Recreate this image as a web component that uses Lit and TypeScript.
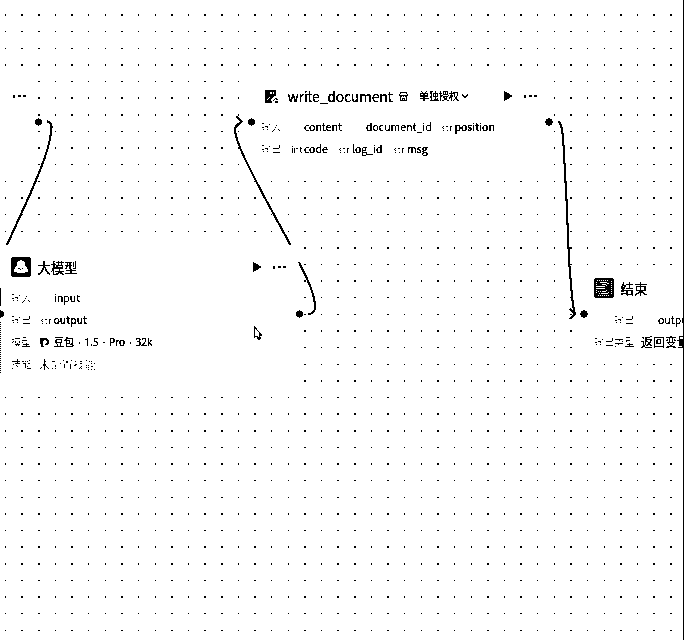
import { LitElement, html, svg, css } from "lit";
import { customElement } from "lit/decorators.js";

type Cell = { x: number; text: string; cls: string; icon?: boolean };
type Row = { cells: Cell[] };

const PITCH = 16.63;

// Grid points straddle one or two device pixels depending on their phase.
const snap = (i: number, origin: number) => {
  const c = origin + i * PITCH;
  const near = Math.round(c);
  return Math.abs(c - near) < 0.24 ? { p: near - 1, s: 2 } : { p: Math.floor(c), s: 1 };
};

const topRows: Row[] = [
  { cells: [
    { x: 261, text: "输入", cls: "label" }, { x: 304, text: "content", cls: "name" },
    { x: 366, text: "document_id", cls: "name" }, { x: 441.5, text: "str", cls: "type" },
    { x: 454.5, text: "position", cls: "name mid" } ] },
  { cells: [
    { x: 261, text: "输出", cls: "label" }, { x: 291, text: "int", cls: "type" },
    { x: 304, text: "code", cls: "name mid" }, { x: 338.5, text: "str", cls: "type" },
    { x: 352, text: "log_id", cls: "name mid" }, { x: 393.5, text: "str", cls: "type" },
    { x: 407, text: "msg", cls: "name mid" } ] },
];
const llmRows: Row[] = [
  { cells: [{ x: 11, text: "输入", cls: "label" }, { x: 54, text: "input", cls: "name" }] },
  { cells: [
    { x: 11, text: "输出", cls: "label" }, { x: 40.5, text: "str", cls: "type" },
    { x: 53.5, text: "output", cls: "name mid" } ] },
  { cells: [
    { x: 11, text: "模型", cls: "label" }, { x: 40, text: "", cls: "", icon: true },
    { x: 54, text: "豆包 · 1.5 · Pro · 32k", cls: "model mid" } ] },
  { cells: [{ x: 11, text: "技能", cls: "label" }, { x: 39, text: "未配置技能", cls: "empty" }] },
];
const endRows: Row[] = [
  { cells: [{ x: 614, text: "输出", cls: "label" }, { x: 658, text: "output", cls: "name" }] },
  { cells: [{ x: 594, text: "输出类型", cls: "label" }, { x: 641, text: "返回变量", cls: "ret" }] },
];

@customElement("app-root")
export class AppRoot extends LitElement {
  static styles = css`
    :host { display: block; width: 684px; height: 640px; overflow: hidden; background: #fff; }
    .canvas {
      position: relative; width: 684px; height: 640px; overflow: hidden; background: #fff;
      box-sizing: border-box; color: #000; filter: url(#ink);
      font-family: "Noto Sans CJK SC", "Noto Sans", sans-serif;
    }
    .layer { position: absolute; left: 0; top: 0; width: 684px; height: 640px; }
    .defs { position: absolute; width: 0; height: 0; }
    .edge { position: absolute; right: 0; top: 0; width: 1px; height: 640px; background: #000; }
    .node { position: absolute; background: #fff; display: flex; flex-direction: column; }
    .prev { left: 0; top: 72px; width: 36px; height: 104px; }
    .tool { left: 251px; top: 72px; width: 298px; height: 104px; }
    .llm { left: 0; top: 246px; width: 299px; height: 147px; }
    .end { left: 584px; top: 272px; width: 99px; height: 88px; overflow: hidden; }
    .head { display: flex; align-items: center; height: 24px; flex: none; white-space: nowrap; }
    .tool .head { padding: 12px 11px 0 14px; }
    .prev .head { padding: 12px 0 0 12px; }
    .llm .head { padding: 9px 12px 0 11px; }
    .end .head { padding: 4px 0 0 10px; }
    .head svg { flex: none; display: block; }
    .title { font-size: 13.4px; line-height: 20px; margin-left: 6.5px; -webkit-text-stroke: .15px #000; }
    .tool .title { font-size: 14px; letter-spacing: -.24px; margin-left: 9.5px; width: 105.5px; }
    .auth { font-size: 10px; line-height: 14px; margin-left: 11px; width: 42px; -webkit-text-stroke: .1px #000; }
    .grow { flex: 1; }
    .store { margin-left: 6px; }
    .play { margin-right: 10px; }
    .rows { flex: 1; }
    .row { display: grid; height: 22px; align-items: center; }
    .row > * { grid-area: 1 / 1; white-space: nowrap; line-height: 16px; justify-self: start; }
    .tool .rows { margin-top: 8px; }
    .llm .rows { margin-top: 8px; flex: none; }
    .end .rows { margin-top: 9px; }
    .label { font-size: 10.2px; color: rgba(0, 0, 0, .56); }
    .type { font-size: 9.2px; color: rgba(0, 0, 0, .64); }
    .name { font-size: 10.5px; -webkit-text-stroke: .08px #000; }
    .model { font-size: 10px; font-family: "Noto Sans", "Noto Sans CJK SC", sans-serif; word-spacing: 1.3px; }
    .mid { -webkit-text-stroke: .22px #000; }
    .empty { font-size: 11.4px; color: rgba(0, 0, 0, .54); }
    .ret { font-size: 12px; -webkit-text-stroke: .1px #000; }
  `;

  private dots() {
    const out = [];
    for (let r = 0; r < 38; r++) {
      const y = snap(r, 15.05);
      for (let c = 0; c < 41; c++) {
        const x = snap(c, 5.6);
        out.push(svg`<rect x=${x.p} y=${y.p} width=${x.s} height=${y.s}></rect>`);
      }
    }
    return out;
  }

  private more() {
    return html`<svg width="15" height="4" viewBox="0 0 15 4" shape-rendering="crispEdges">
      <path d="M1 1h2v3H1zM6 1h3v2H6zM11 1h3v2H11z"/></svg>`;
  }

  private play() {
    return html`<svg class="play" width="9" height="10" viewBox="0 0 9 10"><path d="M.3 0L9 5 .3 10z"/></svg>`;
  }

  private rows(rows: Row[], left: number) {
    return html`<div class="rows">${rows.map((r) => html`<div class="row">
      ${r.cells.map((c) => c.icon
        ? html`<svg style="margin-left:${c.x - left}px" width="9" height="10" viewBox="0 0 9 10">
            <path d="M0 1h4.500C7.500 1 9 3 9 4.500 9 6.500 8 8 6 8.500L5 8 7 6V4L5.500 3H4L3 4v5l1 1H1V8L0 6z"/></svg>`
        : html`<span class=${c.cls} style="margin-left:${c.x - left}px">${c.text}</span>`)}
    </div>`)}</div>`;
  }

  render() {
    return html`
      <svg class="defs"><filter id="ink" x="0" y="0" width="100%" height="100%" color-interpolation-filters="sRGB">
        <feComponentTransfer>
          <feFuncR type="discrete" tableValues="0 0 0 1 1"/><feFuncG type="discrete" tableValues="0 0 0 1 1"/><feFuncB type="discrete" tableValues="0 0 0 1 1"/>
        </feComponentTransfer></filter></svg>
      <div class="canvas">
        <svg class="layer" shape-rendering="crispEdges">${this.dots()}</svg>
        <section class="node prev"><div class="head">${this.more()}</div></section>
        <section class="node tool">
          <div class="head">
            <svg width="13" height="13" viewBox="0 0 13 13">
              <path d="M0 0h11v6h-1l-2 1-2 3 1 3H0z"/>
              <path d="M2 10l3-3M5 3h2M8 2l1 2" stroke="#fff" stroke-width="1.3"/>
              <path d="M8 11.500l1.500-2M10 12h3M10.500 8l2 2" stroke="#000" stroke-width="1"/>
            </svg>
            <span class="title">write_document</span>
            <svg class="store" width="9" height="9" viewBox="0 0 9 9" fill="none" stroke="#000">
              <path d="M1.500.5h6l1 3H.5zM1.500 4v4.500h6V4M.5 3.500l1.500 1 1.500-1 1 1 1-1 1.500 1 1.500-1M3.500 8V6.500h2V8"/></svg>
            <span class="auth">单独授权</span>
            <svg width="8" height="6" viewBox="0 0 8 6" fill="none" stroke="#000" stroke-width="1.300"><path d="M1 1.500l3 3 3-3"/></svg>
            <span class="grow"></span>${this.play()}${this.more()}
          </div>
          ${this.rows(topRows, 251)}
        </section>
        <section class="node llm">
          <div class="head">
            <svg width="20" height="20" viewBox="0 0 20 20">
              <rect width="20" height="20" rx="2.500"/>
              <path fill="#fff" d="M6.500 5Q10 1.500 13.500 5L14.500 9l2.500 3v2.500L13.500 16H6.500L3 14.500V12L5.500 9z"/>
              <path d="M7 11h2v1H7zM9 12h1v1H9zM11 12h1v-1h-1z"/>
            </svg>
            <span class="title">大模型</span>
            <span class="grow"></span>${this.play()}${this.more()}
          </div>
          ${this.rows(llmRows, 0)}
        </section>
        <section class="node end">
          <div class="head">
            <svg width="20" height="20" viewBox="0 0 20 20" fill="none">
              <rect width="20" height="20" rx="2" fill="#000"/>
              <path stroke="#fff" stroke-dasharray="1 1" d="M3 2.500h12M17.500 3v13M4 17.500h12M2.500 4v12M5 15.500h6M4 13.500h6"/>
              <path stroke="#fff" d="M6 4.500h6.500l2.500 1.500v8l-2 1.500H8M3 8.500h8M3 10.500h8M7.500 6.500h4.500l1 1.500v4l-1 1.500H8"/>
            </svg>
            <span class="title">结束</span>
          </div>
          ${this.rows(endRows, 584)}
        </section>
        <svg class="layer" fill="none" stroke="#000" stroke-width="1.900">
          <path d="M47 121.500C51 121.500 52.500 125 51 131C50 148 39 173 31 192L7 245"/>
          <path d="M241 122L236 126C234 130 237 140 239 145C245 161 256 181 266 200L290.500 245"/>
          <path d="M236.500 116l5 5.500-5 4.500M299 262L308 281C313 292 315 300 315 308C314.500 312 312 314 308 314"/>
          <path d="M558 121.500C562 123 562.500 132 563.500 145L566.500 200L569 260L571 285C572 298 573 308 575 314M570 308.500l5 5.500-5.500 5"/>
          <g fill="#000" stroke="none">
            <circle cx="38.500" cy="122" r="3.500"/><circle cx="251.500" cy="122" r="3.500"/>
            <circle cx="549" cy="122" r="3.500"/><circle cx="0.500" cy="314" r="3.600"/>
            <circle cx="299.500" cy="314" r="3.500"/><circle cx="584" cy="314" r="3.500"/>
          </g>
          <path stroke-width="1" d="M.5 288v18"/><path stroke-width="1" stroke-dasharray="1 1" d="M.5 322v51"/>
          <path fill="#fff" stroke-width="1" d="M254.500 326.500v11l2-1.500 2 3.500 2-1-1.500-3h2.500z"/>
          <path stroke-width="1.500" d="M257 336.500l2 3M259 334.500h2.500"/>
        </svg>
        <div class="edge"></div>
      </div>`;
  }
}
